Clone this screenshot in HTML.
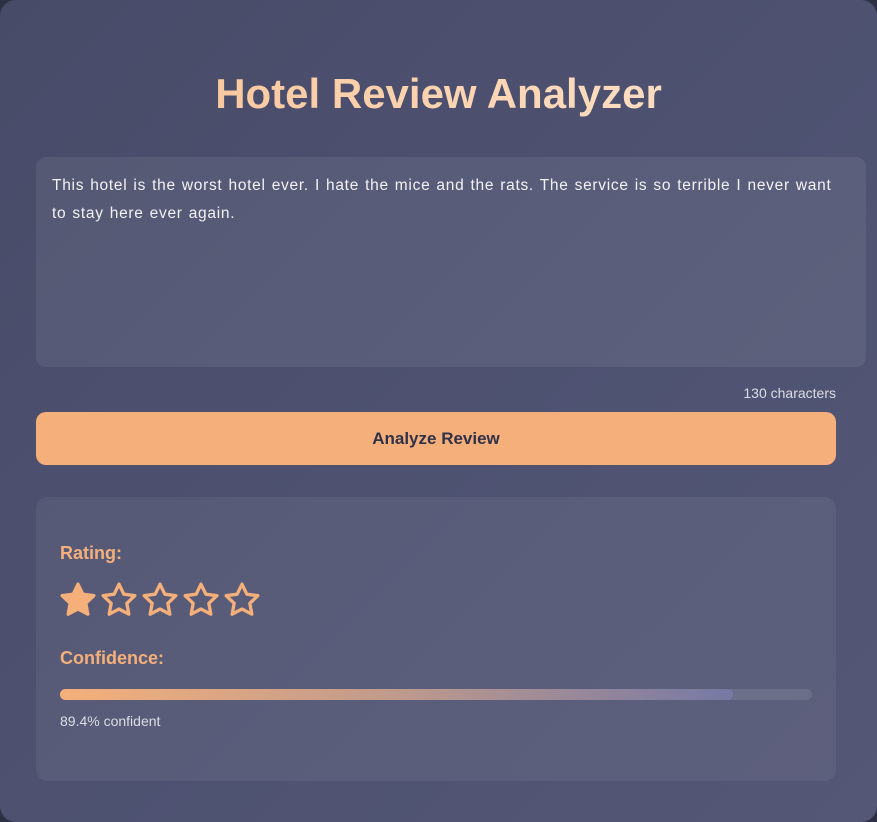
<!DOCTYPE html>
<html><head><style>
html,body{margin:0;padding:0;width:877px;height:822px;background:#2e3044;overflow:hidden;font-family:"Liberation Sans",sans-serif;}
.card{position:absolute;left:0;top:0;width:877px;height:822px;border-radius:16px;background:linear-gradient(135deg,#484b68 0%,#4f5372 60%,#545775 100%);}
h1{position:absolute;left:0;width:877px;top:70px;margin:0;text-align:center;font-size:42px;font-weight:bold;color:#fcd2ae;background:linear-gradient(90deg,#f8c090,#fde6d2);-webkit-background-clip:text;background-clip:text;-webkit-text-fill-color:transparent;}
.ta{position:absolute;left:36px;top:157px;width:830px;height:210px;border-radius:10px;background:rgba(255,255,255,0.07);}
.ta p{margin:0;padding:15px 0 0 16px;color:#f2f2f6;font-size:15.5px;line-height:28px;letter-spacing:0.72px;word-spacing:1px;white-space:nowrap;}
.cc{position:absolute;right:41px;top:385px;color:#dcdde6;font-size:14px;}
.btn{position:absolute;left:36px;top:412px;width:800px;height:53px;border-radius:10px;background:#f5af7b;color:#2f3148;font-weight:bold;font-size:17px;text-align:center;line-height:53px;}
.res{position:absolute;left:36px;top:497px;width:800px;height:284px;border-radius:12px;background:rgba(255,255,255,0.06);}
.lbl{position:absolute;left:24px;color:#f5af7b;font-weight:bold;font-size:18px;}
.stars{position:absolute;left:21px;top:83px;}
.stars svg{margin-right:-1px}
.bar{position:absolute;left:24px;top:192px;width:752px;height:11px;border-radius:6px;background:rgba(255,255,255,0.1);}
.fill{width:673px;height:11px;border-radius:6px;background:linear-gradient(90deg,#f5b07a,#bf9a8c 50%,#7679a5);}
.conf{position:absolute;left:24px;top:216px;color:#dcdde6;font-size:14px;}
</style></head><body>
<div class="card">
<h1>Hotel Review Analyzer</h1>
<div class="ta"><p>This hotel is the worst hotel ever. I hate the mice and the rats. The service is so terrible I never want<br>to stay here ever again.</p></div>
<div class="cc">130 characters</div>
<div class="btn">Analyze Review</div>
<div class="res">
<div class="lbl" style="top:46px">Rating:</div>
<div class="stars">
<svg width="42" height="40" viewBox="0 0 24 24"><path d="M12 2.5l2.9 6 6.6.9-4.8 4.6 1.2 6.5L12 17.4l-5.9 3.1 1.2-6.5L2.5 9.4l6.6-.9z" fill="#f5af7b" stroke="#f5af7b" stroke-width="2" stroke-linejoin="round"/></svg><svg width="42" height="40" viewBox="0 0 24 24"><path d="M12 2.5l2.9 6 6.6.9-4.8 4.6 1.2 6.5L12 17.4l-5.9 3.1 1.2-6.5L2.5 9.4l6.6-.9z" fill="none" stroke="#f5af7b" stroke-width="2" stroke-linejoin="round"/></svg><svg width="42" height="40" viewBox="0 0 24 24"><path d="M12 2.5l2.9 6 6.6.9-4.8 4.6 1.2 6.5L12 17.4l-5.9 3.1 1.2-6.5L2.5 9.4l6.6-.9z" fill="none" stroke="#f5af7b" stroke-width="2" stroke-linejoin="round"/></svg><svg width="42" height="40" viewBox="0 0 24 24"><path d="M12 2.5l2.9 6 6.6.9-4.8 4.6 1.2 6.5L12 17.4l-5.9 3.1 1.2-6.5L2.5 9.4l6.6-.9z" fill="none" stroke="#f5af7b" stroke-width="2" stroke-linejoin="round"/></svg><svg width="42" height="40" viewBox="0 0 24 24"><path d="M12 2.5l2.9 6 6.6.9-4.8 4.6 1.2 6.5L12 17.4l-5.9 3.1 1.2-6.5L2.5 9.4l6.6-.9z" fill="none" stroke="#f5af7b" stroke-width="2" stroke-linejoin="round"/></svg>
</div>
<div class="lbl" style="top:151px">Confidence:</div>
<div class="bar"><div class="fill"></div></div>
<div class="conf">89.4% confident</div>
</div>
</div>
</body></html>
